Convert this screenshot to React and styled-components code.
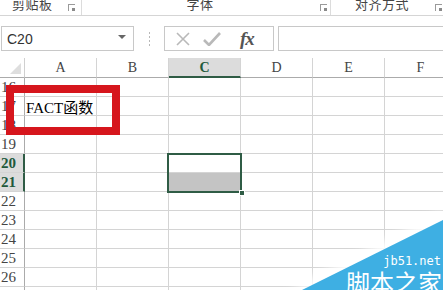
import React from "react";
import styled, { createGlobalStyle } from "styled-components";

const Global = createGlobalStyle`
  html, body { margin: 0; padding: 0; background: #fff; overflow: hidden; }
  body { width: 443px; height: 290px; }
  * { box-sizing: border-box; }
`;

const Page = styled.div`
  position: relative;
  width: 443px;
  height: 290px;
  overflow: hidden;
  background: #fff;
  font-family: "Liberation Sans", "Noto Sans CJK SC", sans-serif;
`;

/* ---------- ribbon group labels ---------- */
const RibbonBar = styled.div`
  display: grid;
  grid-template-columns: 82px 249px 1fr;
  height: 16px;
  border-bottom: 1px solid #d5d5d5;
  overflow: hidden;
`;

const Group = styled.div`
  position: relative;
  display: flex;
  align-items: flex-start;
  justify-content: ${(p) => p.$align || "center"};
  padding-left: ${(p) => p.$pl || 0}px;
  padding-right: ${(p) => p.$pr || 0}px;
  border-right: ${(p) => (p.$sep ? "1px solid #dcdcdc" : "none")};
  height: 15px;
`;

const GroupLabel = styled.span`
  font-family: "Noto Sans CJK SC", sans-serif;
  font-size: 13px;
  line-height: 13px;
  margin-top: -3px;
  color: #444;
  letter-spacing: 0.5px;
`;

const Launcher = styled.span`
  position: absolute;
  right: ${(p) => p.$r}px;
  top: 4px;
  width: 7px;
  height: 7px;
  border-left: 1px solid #9a9a9a;
  border-top: 1px solid #9a9a9a;
  &::after {
    content: "";
    position: absolute;
    right: 0;
    bottom: 0;
    width: 3px;
    height: 3px;
    background: #8a8a8a;
  }
`;

/* ---------- formula bar ---------- */
const FormulaRow = styled.div`
  display: flex;
  align-items: stretch;
  height: 25px;
  margin-top: 10px;
  padding-left: 1px;
`;

const NameBox = styled.div`
  width: 133px;
  border: 1px solid #c8c8c8;
  display: flex;
  align-items: center;
  justify-content: space-between;
  padding: 0 7px 0 5px;
  font-family: "Liberation Sans", sans-serif;
  font-size: 14px;
  color: #333;
`;

const Caret = styled.span`
  width: 0;
  height: 0;
  border-left: 4px solid transparent;
  border-right: 4px solid transparent;
  border-top: 4px solid #666;
  margin-top: -3px;
`;

const Grip = styled.div`
  width: 30px;
  display: flex;
  flex-direction: column;
  align-items: center;
  justify-content: center;
  gap: 2px;
  span {
    width: 1px;
    height: 2px;
    background: #b8b8b8;
  }
`;

const FxBox = styled.div`
  width: 110px;
  border: 1px solid #c8c8c8;
  display: flex;
  align-items: center;
  padding-left: 11px;
  gap: 13px;
`;

const Fx = styled.span`
  font-family: "Liberation Serif", serif;
  font-style: italic;
  font-weight: bold;
  font-size: 19px;
  color: #555;
  margin-left: 6px;
  letter-spacing: -1px;
`;

const FormulaInput = styled.div`
  flex: 1;
  margin-left: 4px;
  border: 1px solid #c8c8c8;
  border-right: none;
`;

/* ---------- sheet grid ---------- */
const Sheet = styled.div`
  position: relative;
  margin-top: 7px;
  display: grid;
  grid-template-columns: 25px repeat(6, 72px);
  grid-template-rows: 20px;
  grid-auto-rows: 19px;
`;

const Corner = styled.div`
  position: relative;
  border-right: 1px solid #d0d0d0;
  border-bottom: 1px solid #ababab;
  &::after {
    content: "";
    position: absolute;
    right: 3px;
    bottom: 3px;
    width: 0;
    height: 0;
    border-left: 11px solid transparent;
    border-bottom: 11px solid #dedede;
  }
`;

const ColHead = styled.div`
  display: flex;
  align-items: center;
  justify-content: center;
  font-family: "Liberation Serif", "Noto Sans CJK SC", serif;
  font-size: 14px;
  color: ${(p) => (p.$active ? "#21593b" : "#444")};
  font-weight: ${(p) => (p.$active ? "bold" : "normal")};
  background: ${(p) => (p.$active ? "#dcdcdc" : "#fff")};
  border-right: 1px solid #d4d4d4;
  border-bottom: ${(p) => (p.$active ? "2px solid #2f5c45" : "1px solid #ababab")};
  padding-top: ${(p) => (p.$active ? 1 : 0)}px;
`;

const RowHead = styled.div`
  display: flex;
  align-items: center;
  padding-left: 1px;
  font-family: "Liberation Serif", serif;
  font-size: 15px;
  color: ${(p) => (p.$active ? "#21593b" : "#444")};
  font-weight: ${(p) => (p.$active ? "bold" : "normal")};
  background: ${(p) => (p.$active ? "#dcdcdc" : "#fff")};
  border-right: ${(p) => (p.$active ? "2px solid #2f5c45" : "1px solid #ababab")};
  border-bottom: 1px solid #d4d4d4;
`;

const Cell = styled.div`
  display: flex;
  align-items: center;
  padding-left: 1px;
  border-right: 1px solid #d4d4d4;
  border-bottom: 1px solid #d4d4d4;
  font-family: "Liberation Serif", "Noto Sans CJK SC", serif;
  font-size: 15px;
  color: #000;
  white-space: nowrap;
  overflow: visible;
  background: ${(p) => p.$fill || "transparent"};
`;

const Selection = styled.div`
  position: absolute;
  left: 167px;
  top: 95px;
  width: 75px;
  height: 40px;
  border: 2px solid #2f5c45;
  pointer-events: none;
`;

const Handle = styled.div`
  position: absolute;
  right: -5px;
  bottom: -5px;
  width: 6px;
  height: 6px;
  background: #2f5c45;
  border: 1px solid #fff;
`;

const RedMark = styled.div`
  position: absolute;
  left: 6px;
  top: 85px;
  width: 114px;
  height: 50px;
  border: 8px solid #d6161d;
  pointer-events: none;
`;

const Watermark = styled.div`
  position: absolute;
  right: 0;
  bottom: 0;
  width: 160px;
  height: 80px;
  pointer-events: none;
  svg { position: absolute; right: 0; bottom: 0; }
`;

const WmSmall = styled.span`
  position: absolute;
  right: 2px;
  bottom: 23px;
  font-family: "DejaVu Sans Mono", monospace;
  font-size: 12px;
  line-height: 12px;
  color: #fff;
`;

const WmBig = styled.span`
  position: absolute;
  right: 1px;
  bottom: -4px;
  font-family: "Noto Sans CJK SC", sans-serif;
  font-size: 24px;
  line-height: 24px;
  color: #fff;
  letter-spacing: 0px;
`;

const cols = ["A", "B", "C", "D", "E", "F"];
const rows = [16, 17, 18, 19, 20, 21, 22, 23, 24, 25, 26, 27];

export default function App() {
  return (
    <Page>
      <Global />
      <RibbonBar>
        <Group $align="flex-start" $pl={12} $sep>
          <GroupLabel>剪贴板</GroupLabel>
          <Launcher $r={6} />
        </Group>
        <Group $pr={12} $sep>
          <GroupLabel>字体</GroupLabel>
          <Launcher $r={3} />
        </Group>
        <Group $align="flex-start" $pl={24}>
          <GroupLabel>对齐方式</GroupLabel>
          <Launcher $r={1} />
        </Group>
      </RibbonBar>

      <FormulaRow>
        <NameBox>
          <span>C20</span>
          <Caret />
        </NameBox>
        <Grip>
          <span />
          <span />
          <span />
          <span />
        </Grip>
        <FxBox>
          <svg width="14" height="14" viewBox="0 0 14 14">
            <path d="M1 1 L13 13 M13 1 L1 13" stroke="#b9b9b9" strokeWidth="1.6" fill="none" />
          </svg>
          <svg width="18" height="14" viewBox="0 0 18 14">
            <path d="M1 8 L6 13 L17 1" stroke="#b9b9b9" strokeWidth="2.6" fill="none" />
          </svg>
          <Fx>fx</Fx>
        </FxBox>
        <FormulaInput />
      </FormulaRow>

      <Sheet>
        <Corner />
        {cols.map((c) => (
          <ColHead key={c} $active={c === "C"}>
            {c}
          </ColHead>
        ))}
        {rows.map((r) => (
          <React.Fragment key={r}>
            <RowHead $active={r === 20 || r === 21}>{r}</RowHead>
            {cols.map((c) => (
              <Cell key={c} $fill={c === "C" && r === 21 ? "#c4c4c4" : undefined}>
                {c === "A" && r === 17 ? "FACT函数" : ""}
              </Cell>
            ))}
          </React.Fragment>
        ))}
        <Selection>
          <Handle />
        </Selection>
      </Sheet>

      <RedMark />

      <Watermark>
        <svg width="160" height="80" viewBox="0 0 160 80">
          <defs>
            <filter id="glow" x="-20%" y="-20%" width="140%" height="140%">
              <feGaussianBlur stdDeviation="4" />
            </filter>
          </defs>
          <polygon points="5,80 160,0 160,80" fill="#ffffff" filter="url(#glow)" opacity="0.9" />
          <polygon points="19,80 160,10 160,80" fill="#3eafe3" />
        </svg>
        <WmSmall>jb51.net</WmSmall>
        <WmBig>脚本之家</WmBig>
      </Watermark>
    </Page>
  );
}
